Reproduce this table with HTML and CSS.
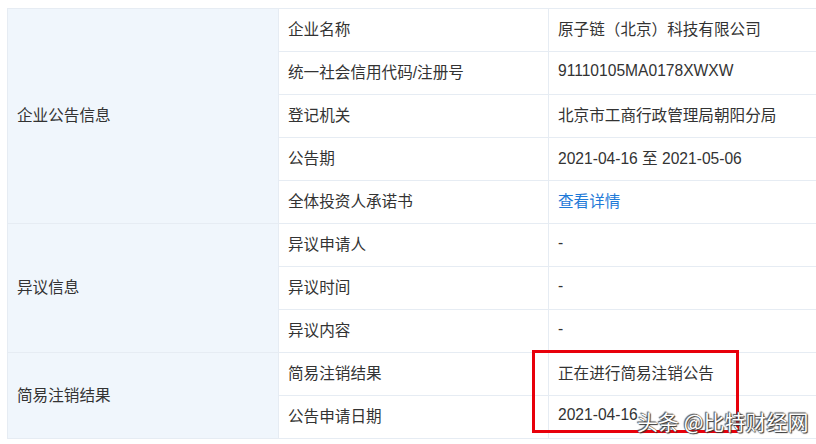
FILE: index.html
```html
<!DOCTYPE html>
<html lang="zh-CN">
<head>
  <meta charset="UTF-8" />
  <meta name="viewport" content="width=device-width, initial-scale=1.0"/>
  <title>简易注销公告</title>
  <link rel="stylesheet" href="styles.css">
</head>
<body>
  <div class="wrap">
    <table class="info">
      <colgroup>
        <col class="c1"><col class="c2"><col class="c3">
      </colgroup>
      <tbody>
        <tr><th rowspan="5">企业公告信息</th><td>企业名称</td><td>原子链（北京）科技有限公司</td></tr>
        <tr><td>统一社会信用代码/注册号</td><td>91110105MA0178XWXW</td></tr>
        <tr><td>登记机关</td><td>北京市工商行政管理局朝阳分局</td></tr>
        <tr><td>公告期</td><td>2021-04-16 至 2021-05-06</td></tr>
        <tr><td>全体投资人承诺书</td><td><a href="#">查看详情</a></td></tr>
        <tr><th rowspan="3">异议信息</th><td>异议申请人</td><td>-</td></tr>
        <tr><td>异议时间</td><td>-</td></tr>
        <tr><td>异议内容</td><td>-</td></tr>
        <tr><th rowspan="2">简易注销结果</th><td>简易注销结果</td><td>正在进行简易注销公告</td></tr>
        <tr><td>公告申请日期</td><td>2021-04-16</td></tr>
      </tbody>
    </table>
    <div class="mark"></div>
    <div class="watermark">头条 @比特财经网</div>
  </div>
</body>
</html>
```

FILE: styles.css
```css
html, body { overflow: hidden; }
body {
  margin: 0;
  padding: 8px 0 0 7px;
  font-family: "Liberation Sans", "Noto Sans CJK SC", sans-serif;
  font-size: 15.6px;
  color: #333;
  background: #fff;
}
.wrap {
  position: relative;
  width: 820px;
}
.info {
  border-collapse: collapse;
  table-layout: fixed;
  width: 820px;
}
.c1 { width: 271px; }
.c2 { width: 270px; }
.info th, .info td {
  height: 38px;
  padding: 0 9px 4px;
  border: 1px solid #e6ecf3;
  text-align: left;
  font-weight: normal;
  white-space: nowrap;
}
.info th {
  background: #f0f6fc;
}
.info a {
  color: #1f7ad8;
  text-decoration: none;
}
.mark {
  position: absolute;
  left: 525px;
  top: 342px;
  width: 201px;
  height: 77px;
  border: 3px solid #e8000b;
}
.watermark {
  position: absolute;
  left: 630px;
  top: 398px;
  font-family: "Noto Sans CJK SC", sans-serif;
  font-size: 21px;
  color: #fff;
  white-space: nowrap;
  text-shadow: 0 0 1px #333, 1px 1px 1px #333, -1px -1px 1px #555;
}
```
